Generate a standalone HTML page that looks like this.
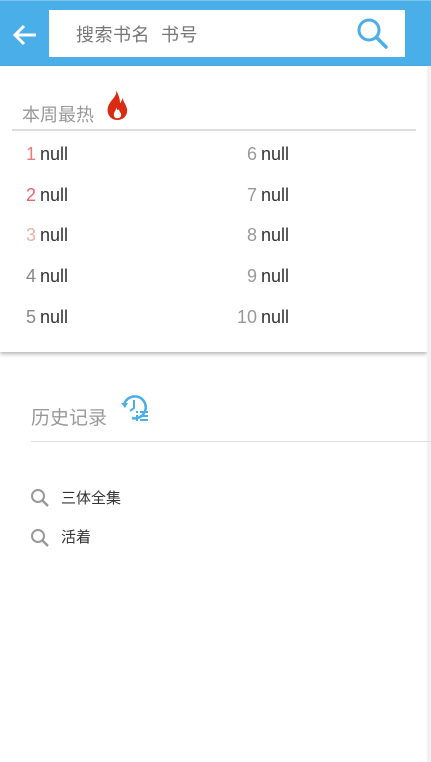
<!DOCTYPE html>
<html><head><meta charset="utf-8"><style>
*{margin:0;padding:0;box-sizing:border-box}
body{width:431px;height:762px;background:#fff;position:relative;overflow:hidden;font-family:"Liberation Sans","Noto Sans CJK SC",sans-serif}
.hdr{position:absolute;left:0;top:0;width:431px;height:66px;background:#4aaee8;border-top:1px solid #7cc3ee}
.box{position:absolute;left:49px;top:10px;width:356px;height:47px;background:#fff}
.ph{position:absolute;left:76px;top:21px;font-size:18px;color:#777;letter-spacing:0.5px}
.strip{position:absolute;left:427px;top:66px;width:4px;height:696px;background:#f1f1f1}
.card{position:absolute;left:0;top:66px;width:427px;height:286px;background:#fff;box-shadow:0 2px 4px rgba(0,0,0,.3)}
.t{position:absolute;color:#999;font-size:17px}
.n{position:absolute;font-size:18px;color:#333;line-height:20px}
.n span{display:inline-block;text-align:right;margin-right:4px}
.h{position:absolute;font-size:14px;color:#333}
</style></head><body>
<div class="hdr"></div>
<svg style="position:absolute;left:10px;top:20px" width="30" height="30" viewBox="0 0 30 30"><path d="M26 15H5M14 6L5 15L14 24" stroke="#fff" stroke-width="3" fill="none"/></svg>
<div class="box"></div>
<div class="ph">搜索书名&nbsp;&nbsp;书号</div>
<svg style="position:absolute;left:355px;top:16px" width="36" height="34" viewBox="0 0 36 34"><circle cx="14" cy="14" r="10" stroke="#4aaee8" stroke-width="3" fill="none"/><path d="M21.5 21.5L31 31" stroke="#4aaee8" stroke-width="3.5" stroke-linecap="round"/></svg>
<div class="card"></div>
<div class="strip"></div>
<div class="t" style="left:22px;top:101px;font-size:18px">本周最热</div>
<svg style="position:absolute;left:104px;top:89px" width="26" height="32" viewBox="0 0 26 32"><path d="M12 1C14 7 6 11 4 18C2 25 7 31 13 31C19 31 24 27 23 20C22 15 19 13 19 9C17 12 17 14 16 14C16 9 14 5 12 1Z" fill="#d92b12"/><path d="M12 18C13 21 9 23 10 27C11 30 16 30 17 27C18 24 15 23 15 20C14 22 13 21 12 18Z" fill="#fff"/></svg>
<div style="position:absolute;left:12px;top:129px;width:404px;height:2px;background:#ddd"></div>
<div class="n" style="left:22px;top:144px"><span style="width:14px;color:#e77">1</span>null</div>
<div class="n" style="left:22px;top:185px"><span style="width:14px;color:#f06070">2</span>null</div>
<div class="n" style="left:22px;top:225px"><span style="width:14px;color:#e9b0a8">3</span>null</div>
<div class="n" style="left:22px;top:266px"><span style="width:14px;color:#888">4</span>null</div>
<div class="n" style="left:22px;top:307px"><span style="width:14px;color:#888">5</span>null</div>
<div class="n" style="left:230px;top:144px"><span style="width:27px;color:#999">6</span>null</div>
<div class="n" style="left:230px;top:185px"><span style="width:27px;color:#999">7</span>null</div>
<div class="n" style="left:230px;top:225px"><span style="width:27px;color:#999">8</span>null</div>
<div class="n" style="left:230px;top:266px"><span style="width:27px;color:#999">9</span>null</div>
<div class="n" style="left:230px;top:307px"><span style="width:27px;color:#999">10</span>null</div>
<div class="t" style="left:31px;top:403px;font-size:19px">历史记录</div>
<svg style="position:absolute;left:120px;top:393px" width="30" height="30" viewBox="0 0 30 30"><path d="M4 12A11 11 0 1 1 12 25" stroke="#4aaee8" stroke-width="2.5" fill="none"/><path d="M1 10L5 15L8 10Z" fill="#4aaee8"/><path d="M14 7V15L10 18" stroke="#4aaee8" stroke-width="2" fill="none"/><path d="M16 19h2M20 19h8M16 23h2M20 23h8M16 27h2M20 27h8" stroke="#4aaee8" stroke-width="2"/></svg>
<div style="position:absolute;left:31px;top:441px;width:400px;height:1px;background:#ddd"></div>
<svg style="position:absolute;left:30px;top:488px" width="20" height="20" viewBox="0 0 20 20"><circle cx="8" cy="8" r="6" stroke="#999" stroke-width="2" fill="none"/><path d="M12.5 12.5L18 18" stroke="#999" stroke-width="2.5"/></svg>
<div class="h" style="left:61px;top:487px;font-size:15px">三体全集</div>
<svg style="position:absolute;left:30px;top:528px" width="20" height="20" viewBox="0 0 20 20"><circle cx="8" cy="8" r="6" stroke="#999" stroke-width="2" fill="none"/><path d="M12.5 12.5L18 18" stroke="#999" stroke-width="2.5"/></svg>
<div class="h" style="left:61px;top:526px;font-size:15px">活着</div>
</body></html>
